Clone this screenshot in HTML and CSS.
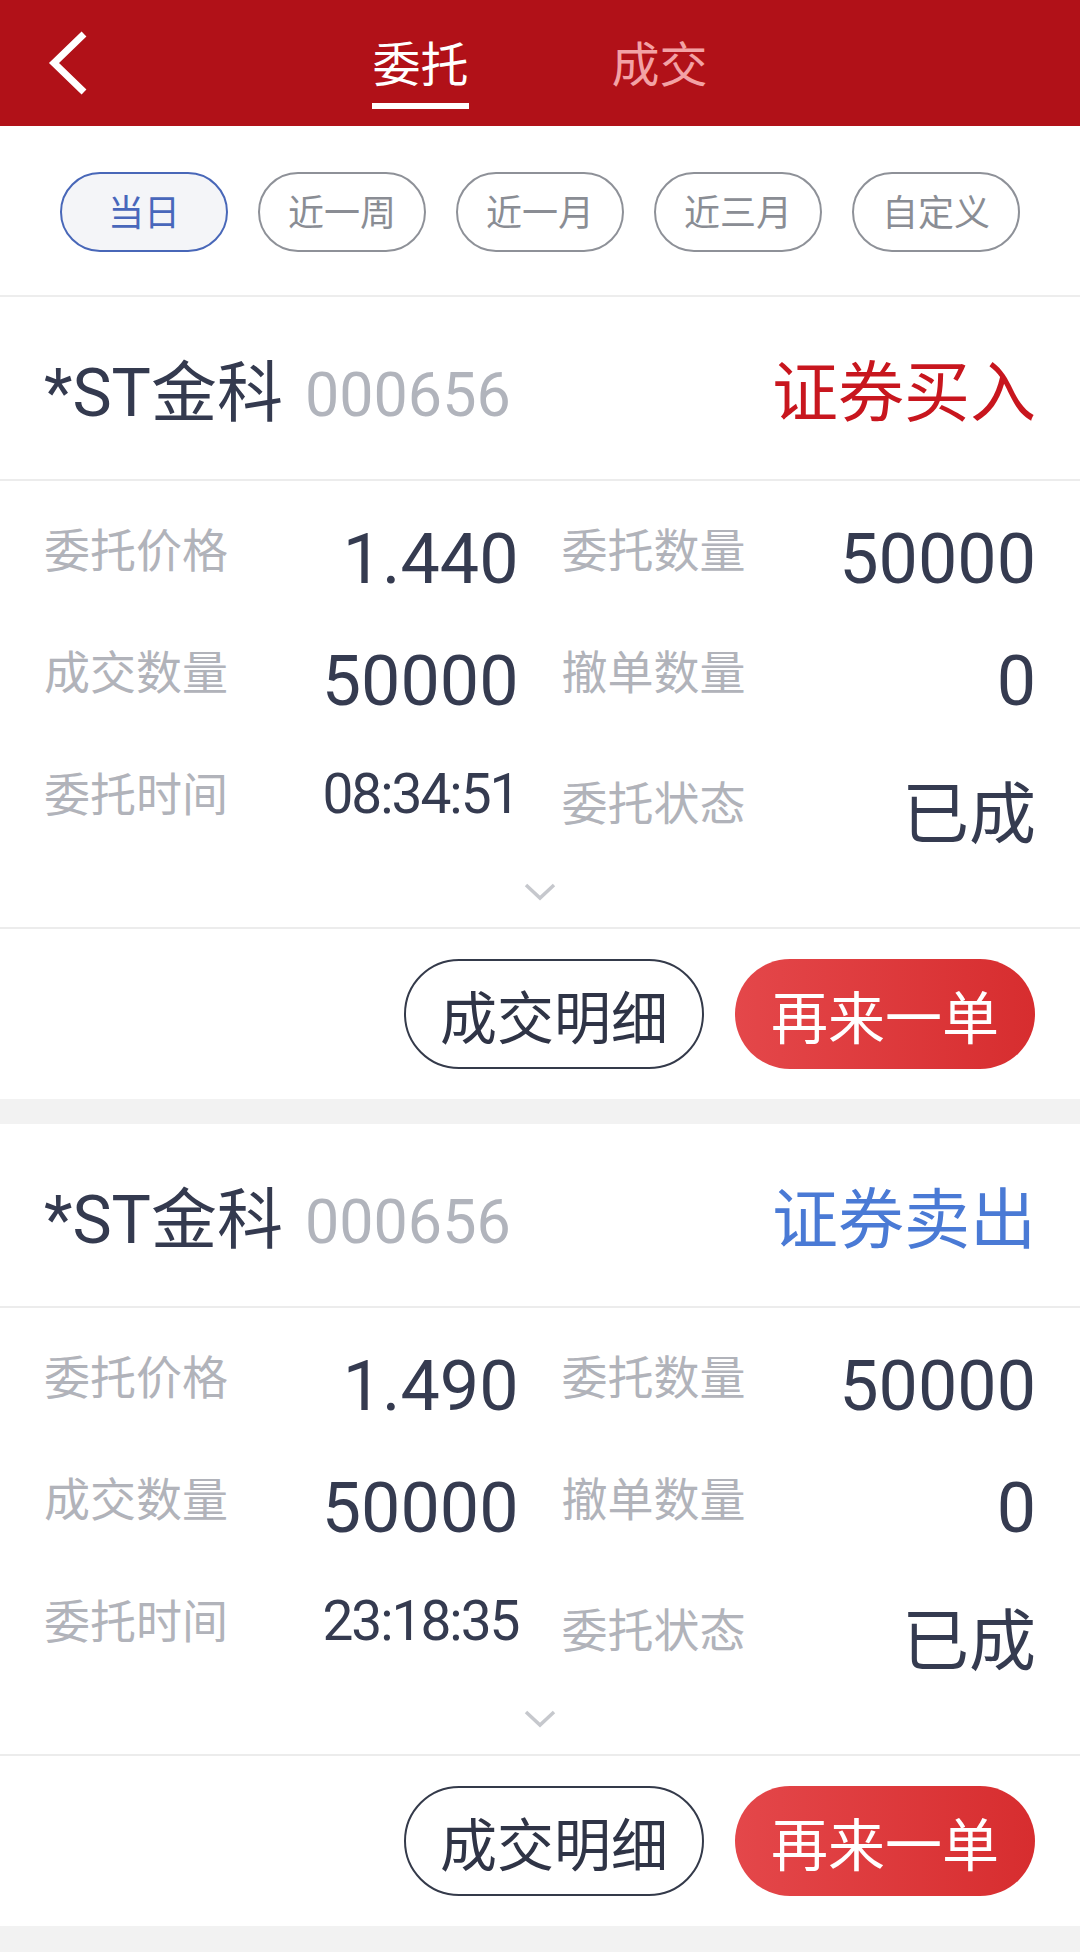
FILE: index.html
```html
<!DOCTYPE html>
<html lang="zh-CN">
<head>
    <meta charset="UTF-8">
    <meta name="viewport" content="width=device-width, initial-scale=1.0">
    <title>委托查询</title>
    <link rel="stylesheet" href="styles.css">
</head>
<body>

<!-- 顶部导航 -->
<div class="nav">
    <div class="nav-back">
        <svg width="44" height="66" viewBox="0 0 44 66">
            <polyline points="38,4 8,33 38,62" fill="none" stroke="#fff" stroke-width="7"/>
        </svg>
    </div>
    <div class="tabs">
        <div class="tab active">委托</div>
        <div class="tab">成交</div>
    </div>
    <div></div>
</div>

<!-- 时间筛选 -->
<div class="filters">
    <div class="chip active">当日</div>
    <div class="chip">近一周</div>
    <div class="chip">近一月</div>
    <div class="chip">近三月</div>
    <div class="chip">自定义</div>
</div>

<div class="order">
    <div class="order-head">
        <div class="stock">
            <span class="stock-name">*ST金科</span>
            <span class="stock-code">000656</span>
        </div>
        <span class="order-type buy">证券买入</span>
    </div>
    <div class="order-info">
        <div class="info-grid">
            <div class="cell"><span class="label">委托价格</span><span class="value">1.440</span></div>
            <div class="cell"><span class="label">委托数量</span><span class="value">50000</span></div>
            <div class="cell"><span class="label">成交数量</span><span class="value">50000</span></div>
            <div class="cell"><span class="label">撤单数量</span><span class="value">0</span></div>
            <div class="cell"><span class="label">委托时间</span><span class="value time">08:34:51</span></div>
            <div class="cell status-cell"><span class="label">委托状态</span><span class="value status">已成</span></div>
        </div>
        <div class="more">
            <svg width="32" height="18" viewBox="0 0 32 18">
                <polyline points="2,2 16,15 30,2" fill="none" stroke="#c6c8cd" stroke-width="3.5"/>
            </svg>
        </div>
    </div>
    <div class="order-actions">
        <button class="btn btn-outline">成交明细</button>
        <button class="btn btn-primary">再来一单</button>
    </div>
</div>

<div class="order">
    <div class="order-head">
        <div class="stock">
            <span class="stock-name">*ST金科</span>
            <span class="stock-code">000656</span>
        </div>
        <span class="order-type sell">证券卖出</span>
    </div>
    <div class="order-info">
        <div class="info-grid">
            <div class="cell"><span class="label">委托价格</span><span class="value">1.490</span></div>
            <div class="cell"><span class="label">委托数量</span><span class="value">50000</span></div>
            <div class="cell"><span class="label">成交数量</span><span class="value">50000</span></div>
            <div class="cell"><span class="label">撤单数量</span><span class="value">0</span></div>
            <div class="cell"><span class="label">委托时间</span><span class="value time">23:18:35</span></div>
            <div class="cell status-cell"><span class="label">委托状态</span><span class="value status">已成</span></div>
        </div>
        <div class="more">
            <svg width="32" height="18" viewBox="0 0 32 18">
                <polyline points="2,2 16,15 30,2" fill="none" stroke="#c6c8cd" stroke-width="3.5"/>
            </svg>
        </div>
    </div>
    <div class="order-actions">
        <button class="btn btn-outline">成交明细</button>
        <button class="btn btn-primary">再来一单</button>
    </div>
</div>

</body>
</html>
```

FILE: styles.css
```css
* {
    box-sizing: border-box;
}
body {
    margin: 0;
    background-color: #f2f2f2;
    font-family: Roboto, "Noto Sans CJK SC", sans-serif;
    color: #353b50;
}

/* 顶部导航 */
.nav {
    display: grid;
    grid-template-columns: 1fr auto 1fr;
    height: 126px;
    background-color: #b11118;
}
.nav-back {
    display: flex;
    align-items: center;
    padding-left: 46px;
}
.nav-back svg {
    display: block;
}
.tabs {
    display: flex;
    gap: 143px;
}
.tab {
    display: flex;
    flex-direction: column;
    padding-top: 42px;
    font-size: 48px;
    line-height: 48px;
    color: #f3a2a5;
}
.tab::after {
    content: "";
    height: 6px;
    margin-top: 13px;
}
.tab.active {
    color: #fff;
}
.tab.active::after {
    background-color: #fff;
}

/* 时间筛选 */
.filters {
    display: flex;
    justify-content: space-between;
    align-items: center;
    height: 171px;
    padding: 3px 60px 0;
    background-color: #fff;
    border-bottom: 2px solid #ededed;
}
.chip {
    width: 168px;
    height: 80px;
    padding-top: 5px;
    border: 2px solid #8e9198;
    border-radius: 40px;
    font-size: 36px;
    line-height: 71px;
    text-align: center;
    color: #8a8d94;
}
.chip.active {
    border-color: #4867b8;
    background-color: #f4f5f8;
    color: #4867bb;
}

/* 委托卡片 */
.order {
    background-color: #fff;
    margin-bottom: 25px;
}
.order-head {
    display: flex;
    justify-content: space-between;
    align-items: center;
    height: 184px;
    padding: 12px 44px 0;
    border-bottom: 2px solid #ececec;
}
.stock {
    display: flex;
    align-items: baseline;
}
.stock-name {
    font-size: 66px;
    line-height: 66px;
    color: #343a4f;
}
.stock-code {
    margin-left: 22px;
    font-size: 61px;
    line-height: 61px;
    color: #b1b4bc;
}
.order-type {
    font-size: 66px;
    line-height: 66px;
}
.order-type.buy {
    color: #c8161e;
}
.order-type.sell {
    color: #4a7ad5;
}

.order-info {
    padding-top: 42px;
    border-bottom: 2px solid #ececec;
}
.info-grid {
    display: grid;
    grid-template-columns: 1fr 1fr;
    grid-auto-rows: 70px;
    column-gap: 43px;
    row-gap: 52px;
    padding: 0 44px;
}
.cell {
    display: flex;
    justify-content: space-between;
    align-items: flex-start;
}
.label {
    margin-top: 5px;
    font-size: 46px;
    line-height: 46px;
    color: #b1b3ba;
}
.value {
    margin-top: 1px;
    font-size: 70px;
    line-height: 70px;
    color: #353b50;
}
.value.time {
    margin-top: 0;
    font-size: 55px;
    line-height: 55px;
    letter-spacing: -2px;
}
.status-cell {
    margin-top: 9px;
}
.value.status {
    margin-top: 6px;
    font-size: 67px;
    line-height: 67px;
}
.more {
    display: flex;
    justify-content: center;
    align-items: center;
    height: 90px;
    padding-top: 20px;
}
.more svg {
    display: block;
}

.order-actions {
    display: flex;
    justify-content: flex-end;
    align-items: center;
    gap: 31px;
    height: 170px;
    padding: 0 45px;
}
.btn {
    width: 300px;
    height: 110px;
    border-radius: 55px;
    font-family: inherit;
    font-size: 57px;
    padding: 0;
    cursor: pointer;
}
.btn-outline {
    border: 2.5px solid #343a4a;
    background-color: #fff;
    color: #2f3446;
}
.btn-primary {
    border: none;
    background: linear-gradient(90deg, #e4474a, #d72d2f);
    color: #fff;
}
```
